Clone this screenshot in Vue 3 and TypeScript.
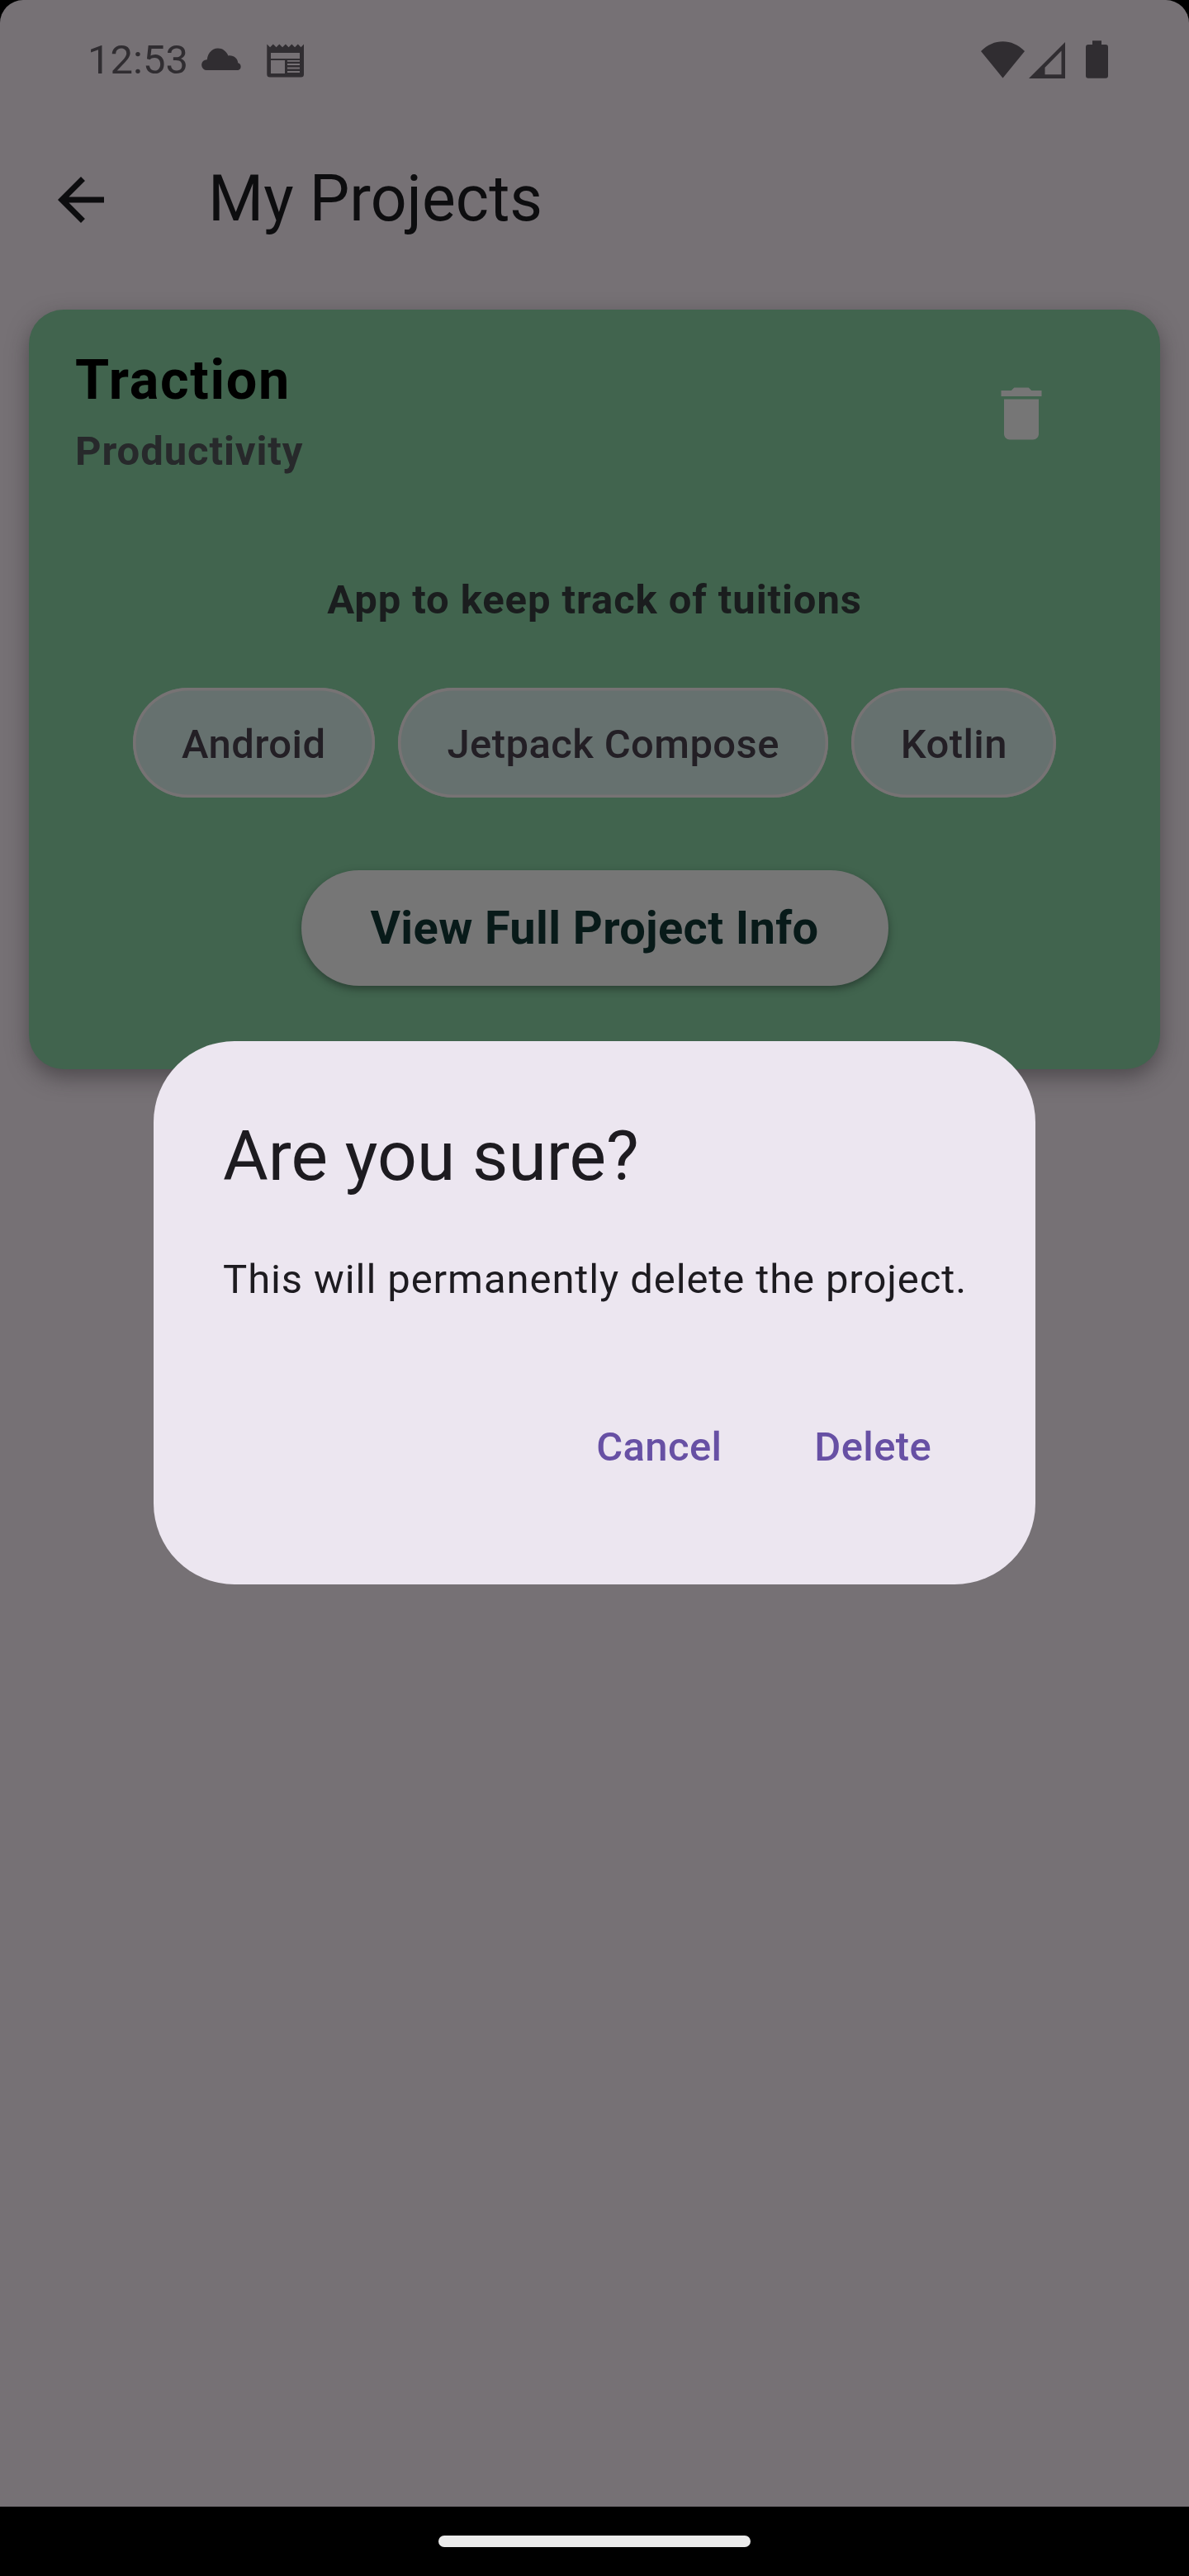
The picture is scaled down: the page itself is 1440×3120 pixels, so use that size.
<script setup lang="ts">
const chips: string[] = ['Android', 'Jetpack Compose', 'Kotlin']
</script>

<template>
  <div class="device">
    <div class="screen">
      <header class="status">
        <span class="clock">12:53</span>
        <svg class="cloud" width="50" height="28" viewBox="0 0 50 28">
          <path d="M6.500 27a6.400 6.400 0 0 1 0-12.800h.3C7.500 6.300 13 .6 20 .6c5.500 0 10.200 3.400 12.300 8.800 6.600-.9 11.800 3.600 11.900 8.800A4.600 4.600 0 0 1 44.500 27z" />
        </svg>
        <svg class="news" width="46" height="42" viewBox="0 0 46 42">
          <path fill-rule="evenodd" d="M.3.500 4.100 4.200 7.800.500l3.800 3.700L15.300.500l3.800 3.700L22.900.500l3.700 3.700L30.300.500l3.800 3.700L37.800.500l3.700 3.700L45 .500V37q0 3.500-3.500 3.500H4Q.3 40.500.3 37zM5 11v7h35v-7zM5 20v16h17V20zM25 20v1.700h15V20zM25 24v2h15v-2zM25 28.500v2h15v-2zM25 33v2h15v-2z" />
        </svg>
        <span class="grow"></span>
        <svg class="wifi" width="53" height="45" viewBox="0 0 53 45">
          <path d="M0 12C8 4 17 .2 26.500.2S45 4 53 12L26.500 44.500z" />
        </svg>
        <svg class="signal" width="44" height="44" viewBox="0 0 44 44">
          <path fill-rule="evenodd" d="M0 44 44 0v44zM19.500 39.300h20V10.500l-20 20.200z" />
        </svg>
        <svg class="battery" width="27" height="46" viewBox="0 0 27 46">
          <path d="M8 .3h11V5h5q3 0 3 3v34.700q0 3-3 3H3q-3 0-3-3V8q0-3 3-3h5z" />
        </svg>
      </header>

      <nav class="topbar">
        <svg width="84" height="84" viewBox="0 0 24 24">
          <path d="M20 11H7.830l5.590-5.590L12 4l-8 8 8 8 1.410-1.410L7.830 13H20z" />
        </svg>
        <h1>My Projects</h1>
      </nav>

      <main>
        <article class="card">
          <div class="head">
            <div>
              <h2>Traction</h2>
              <p class="category">Productivity</p>
            </div>
            <button class="trash" aria-label="Delete project">
              <svg width="84" height="84" viewBox="0 0 24 24">
                <path d="M6 19c0 1.100.9 2 2 2h8c1.100 0 2-.9 2-2V7H6zM19 4h-3.500l-1-1h-5l-1 1H5v2h14z" />
              </svg>
            </button>
          </div>
          <p class="description">App to keep track of tuitions</p>
          <div class="chips">
            <span v-for="chip in chips" :key="chip" class="chip">{{ chip }}</span>
          </div>
          <button class="info">View Full Project Info</button>
        </article>
      </main>
    </div>

    <footer class="navbar"><span class="handle"></span></footer>

    <section class="dialog" role="alertdialog">
      <h2>Are you sure?</h2>
      <p>This will permanently delete the project.</p>
      <div class="actions">
        <button>Cancel</button>
        <button>Delete</button>
      </div>
    </section>
  </div>
</template>

<style>
body {
  margin: 0;
  background: #000;
}
</style>

<style scoped>
.device {
  position: relative;
  display: flex;
  flex-direction: column;
  width: 1440px;
  height: 3120px;
  overflow: hidden;
  background: #000;
  font-family: Roboto, sans-serif;
}
h1, h2, p {
  margin: 0;
}
button {
  padding: 0;
  border: 0;
  background: none;
  font-family: inherit;
}
svg {
  display: block;
  flex: none;
}
.screen {
  height: 3036px;
  border-radius: 28px 28px 0 0;
  background: #767175;
}
.status {
  display: flex;
  align-items: flex-start;
  height: 144px;
  padding: 0 98px 0 106px;
  box-sizing: border-box;
  fill: #302d31;
}
.clock {
  width: 138px;
  font-size: 49px;
  line-height: 145px;
  color: #302d31;
}
.cloud { margin-top: 58px; }
.news { margin: 53px 0 0 29px; }
.grow { flex: 1; }
.wifi { margin-top: 50px; }
.signal { margin: 51px 0 0 5px; }
.battery { margin: 49px 0 0 25px; }
.topbar {
  display: flex;
  align-items: center;
  height: 196px;
  padding-left: 56px;
  fill: #0d0d0f;
}
.topbar h1 {
  margin-left: 112px;
  padding-bottom: 2px;
  font-size: 77px;
  font-weight: 400;
  line-height: 98px;
  color: #0d0d0f;
}
main {
  padding: 35px;
}
.card {
  display: flex;
  flex-direction: column;
  align-items: center;
  height: 920px;
  padding-top: 42px;
  box-sizing: border-box;
  border-radius: 42px;
  background: #41644e;
  box-shadow: 0 10px 26px rgba(40, 35, 40, 0.5);
}
.head {
  display: flex;
  justify-content: space-between;
  align-items: flex-start;
  width: 100%;
  height: 168px;
  padding: 0 84px 0 56px;
  box-sizing: border-box;
}
.card h2 {
  font-size: 66.5px;
  font-weight: 700;
  line-height: 86px;
  letter-spacing: 1.7px;
  color: #000;
}
.category {
  margin-top: 8px;
  font-size: 49px;
  font-weight: 700;
  line-height: 71px;
  letter-spacing: 0.9px;
  color: #27292b;
}
.trash {
  display: flex;
  justify-content: center;
  align-items: center;
  width: 168px;
  height: 168px;
  fill: #767676;
}
.description {
  margin-top: 106px;
  font-size: 49px;
  font-weight: 700;
  line-height: 71px;
  letter-spacing: 0.9px;
  color: #1a1d1e;
}
.chips {
  display: flex;
  gap: 28px;
  margin-top: 71px;
}
.chip {
  height: 133px;
  padding: 0 59.5px;
  box-sizing: border-box;
  border-radius: 67px;
  background: #66716f;
  box-shadow: inset 0 0 0 3.5px #777374;
  font-size: 49px;
  font-weight: 500;
  line-height: 137px;
  letter-spacing: 0.4px;
  color: #231f25;
}
.info {
  width: 711px;
  height: 140px;
  margin-top: 88px;
  border-radius: 70px;
  background: #767676;
  box-shadow: 0 4px 10px rgba(20, 30, 25, 0.5);
  font-size: 56px;
  font-weight: 700;
  line-height: 140px;
  letter-spacing: 0.35px;
  color: #081a19;
}
.navbar {
  display: flex;
  justify-content: center;
  height: 84px;
}
.handle {
  width: 378px;
  height: 14px;
  margin-top: 35px;
  border-radius: 7px;
  background: #ebebeb;
}
.dialog {
  position: absolute;
  top: 1261px;
  left: 186px;
  width: 1068px;
  height: 658px;
  padding: 84px;
  box-sizing: border-box;
  border-radius: 98px;
  background: #ece6f0;
}
.dialog h2 {
  font-size: 84px;
  font-weight: 400;
  line-height: 112px;
  color: #1d1b20;
}
.dialog p {
  margin-top: 57px;
  font-size: 49px;
  line-height: 71px;
  letter-spacing: 0.9px;
  white-space: nowrap;
  color: #1d1b20;
}
.actions {
  display: flex;
  justify-content: flex-end;
  gap: 28px;
  margin-top: 97px;
}
.actions button {
  height: 141px;
  padding: 0 42px;
  font-size: 49px;
  font-weight: 500;
  line-height: 141px;
  letter-spacing: 0.35px;
  color: #6750a4;
}
</style>
